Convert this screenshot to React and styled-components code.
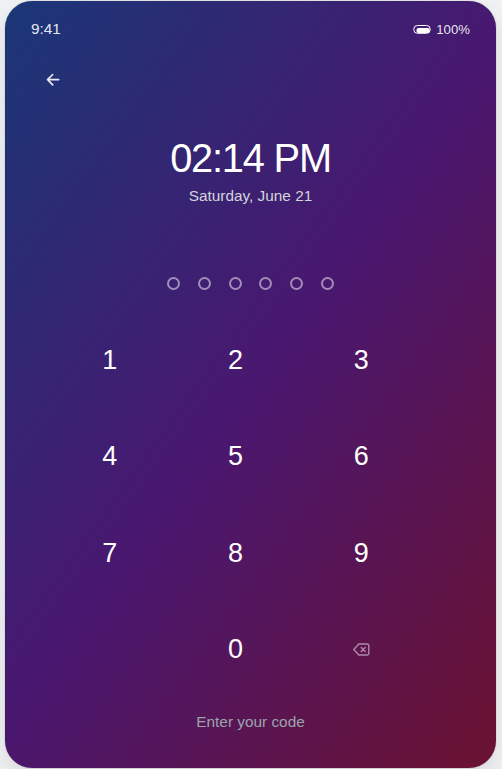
import React from "react";
import styled, { createGlobalStyle } from "styled-components";

const GlobalStyle = createGlobalStyle`
  * { box-sizing: border-box; }
  body { margin: 0; background: #f0f2f4; font-family: "Liberation Sans", Arial, sans-serif; }
`;

const Page = styled.main`
  height: 769px;
  padding: 1px 6px 1px 5px;
  overflow: hidden;
`;

const Phone = styled.section`
  height: 767px;
  display: flex;
  flex-direction: column;
  align-items: center;
  border-radius: 27px;
  color: #fff;
  background: linear-gradient(126deg, #1a3777 0%, #4a176f 51%, #6b1230 100%);
  box-shadow: 0 10px 24px rgba(0, 0, 0, 0.1), 0 0 1px rgba(0, 0, 0, 0.5);
`;

const StatusBar = styled.header`
  width: 100%;
  height: 56px;
  padding: 0 26px;
  display: flex;
  align-items: center;
  justify-content: space-between;
  color: rgba(255, 255, 255, 0.9);
  font-size: 15.36px;
`;

const Battery = styled.div`
  display: flex;
  align-items: center;
  gap: 5px;
  font-size: 13.2px;
`;

const BackButton = styled.button`
  align-self: flex-start;
  width: 34px;
  height: 34px;
  margin: 5px 0 0 31px;
  padding: 0;
  display: grid;
  place-items: center;
  border: 0;
  background: none;
  color: rgba(255, 255, 255, 0.9);
`;

const Clock = styled.time`
  margin-top: 38px;
  height: 48px;
  line-height: 48px;
  font-size: 39.8px;
  letter-spacing: -1.2px;
`;

const DateLine = styled.div`
  margin-top: 4px;
  height: 20px;
  line-height: 20px;
  font-size: 15.36px;
  color: #d1d5db;
`;

const CodeDots = styled.div`
  display: flex;
  gap: 17.7px;
  margin-top: 71px;
`;

const Dot = styled.span`
  width: 13px;
  height: 13px;
  border: 2px solid rgba(255, 255, 255, 0.5);
  border-radius: 50%;
`;

const Keypad = styled.div`
  display: grid;
  grid-template-columns: repeat(3, 68px);
  grid-auto-rows: 68px;
  column-gap: 57.7px;
  row-gap: 28.6px;
  margin: 36px 30px 0 0;
`;

const Key = styled.button`
  grid-column: ${({ $column }) => $column || "auto"};
  display: grid;
  place-items: center;
  padding: 0;
  border: 0;
  background: none;
  color: ${({ $muted }) => ($muted ? "rgba(255, 255, 255, 0.5)" : "#fff")};
  font: 27px "Liberation Sans", Arial, sans-serif;
`;

const Hint = styled.p`
  margin: 28px 0 0;
  line-height: 20px;
  font-size: 15.36px;
  color: #9ca3af;
`;

const BatteryIcon = () => (
  <svg width="18" height="10" viewBox="0 0 18 10" fill="none">
    <rect x=".8" y="1.5" width="16.4" height="7.8" rx="3.6" stroke="#fff" strokeWidth="1" />
    <rect x="3.5" y="4" width="13.2" height="5" rx="2" fill="#fff" />
  </svg>
);

const ArrowIcon = () => (
  <svg width="19" height="19" viewBox="0 0 24 24" fill="none" stroke="currentColor" strokeWidth="2.1" strokeLinecap="round" strokeLinejoin="round">
    <path d="M18.5 12.2h-14m6.5 6.5-6.5-6.5L11 5.7" />
  </svg>
);

const DeleteIcon = () => (
  <svg width="17" height="13" viewBox="0 0 17 13" fill="none" stroke="currentColor" strokeWidth="1.4" strokeLinecap="round" strokeLinejoin="round">
    <path d="M5.8 1h8.6A1.4 1.4 0 0 1 15.8 2.4v8.2a1.4 1.4 0 0 1-1.4 1.4H5.8L.8 6.5Z" />
    <path d="m8.2 4.4 4 4.2m0-4.2-4 4.2" />
  </svg>
);

export default function App() {
  return (
    <>
      <GlobalStyle />
      <Page>
        <Phone>
          <StatusBar>
            <span>9:41</span>
            <Battery><BatteryIcon /><span>100%</span></Battery>
          </StatusBar>
          <BackButton aria-label="Back"><ArrowIcon /></BackButton>
          <Clock>02:14 PM</Clock>
          <DateLine>Saturday, June 21</DateLine>
          <CodeDots>{[0, 1, 2, 3, 4, 5].map((i) => <Dot key={i} />)}</CodeDots>
          <Keypad>
            {[1, 2, 3, 4, 5, 6, 7, 8, 9].map((n) => <Key key={n}>{n}</Key>)}
            <Key $column="2">0</Key>
            <Key $muted aria-label="Delete"><DeleteIcon /></Key>
          </Keypad>
          <Hint>Enter your code</Hint>
        </Phone>
      </Page>
    </>
  );
}
